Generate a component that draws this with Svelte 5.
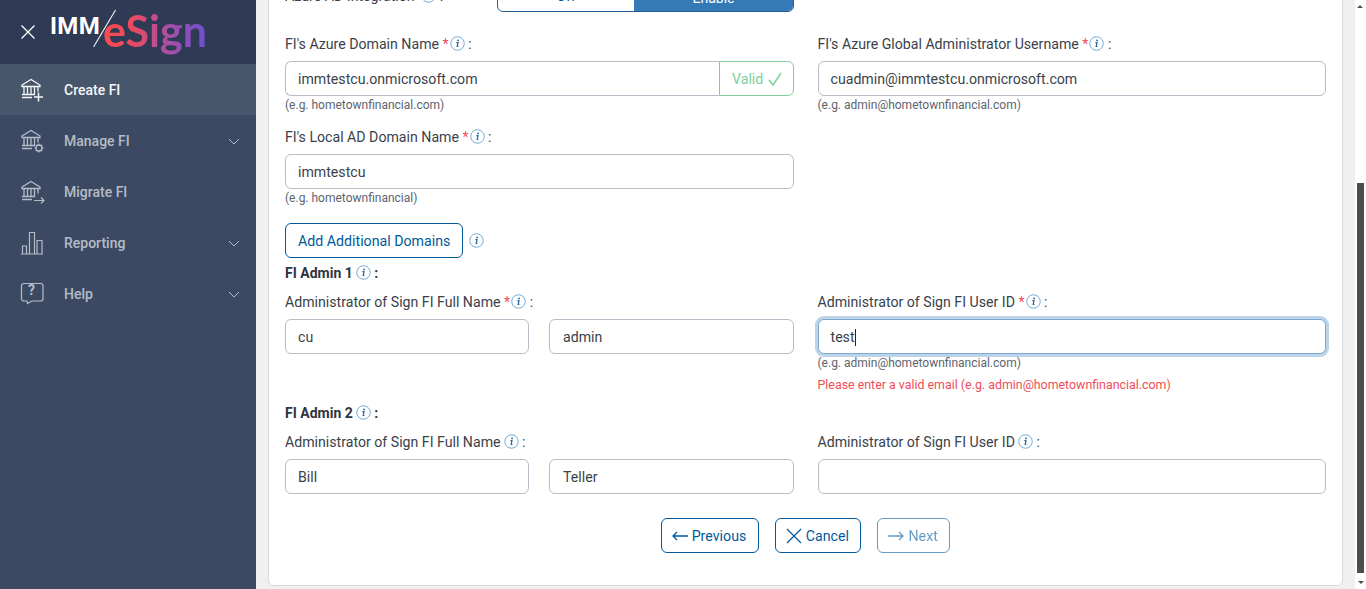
<script lang="ts">
	interface NavItem {
		label: string;
		icon: string;
		chevron: boolean;
		active?: boolean;
	}

	const navItems: NavItem[] = [
		{ label: 'Create FI', icon: 'plus', chevron: false, active: true },
		{ label: 'Manage FI', icon: 'gear', chevron: true },
		{ label: 'Migrate FI', icon: 'arrow', chevron: false },
		{ label: 'Reporting', icon: 'chart', chevron: true },
		{ label: 'Help', icon: 'help', chevron: true }
	];
</script>

{#snippet info()}
	<svg class="info" viewBox="0 0 16 16" width="15" height="15">
		<circle cx="8" cy="8" r="7.2" fill="none" stroke="#6ba6d4" stroke-width="1" />
		<path d="M6.8 7.1h1.7l-.8 4h1.200" fill="none" stroke="#24679f" stroke-width="1.300" />
		<circle cx="8.6" cy="4.700" r="1" fill="#24679f" />
	</svg>
{/snippet}

{#snippet bank()}
	<path d="M3 8 12 2.500 21 8v1.500H3zM5 9.500v8M8.500 9.500v8M12 9.500v8M15.500 9.500v8M19 9.500v5M3 17.500h13M3 20.500h10" fill="none" stroke="currentColor" stroke-width="1.300" />
{/snippet}

<div class="layout">
	<aside class="sidebar">
		<header class="brand">
			<svg class="close" viewBox="0 0 14 14" width="14" height="14">
				<path d="M.5.5l13 13M13.5.5l-13 13" stroke="#fff" stroke-width="1.300" fill="none" />
			</svg>
			<div class="logo">
				<span class="imm">IMM</span>
				<span class="slash"></span>
				<span class="esign">eSign</span>
			</div>
		</header>
		<nav>
			{#each navItems as item}
				<div class="nav-item" class:active={item.active}>
					<svg class="nav-icon" viewBox="0 0 26 26" width="26" height="26">
						{#if item.icon === 'plus'}
							{@render bank()}
							<path d="M19.500 15.500v9M15 20h9" stroke="currentColor" stroke-width="1.500" fill="none" />
						{:else if item.icon === 'gear'}
							{@render bank()}
							<circle cx="20" cy="20" r="3" fill="none" stroke="currentColor" stroke-width="1.300" />
							<path d="M20 15.500v1.700M20 22.800v1.700M15.500 20h1.700M22.800 20h1.700M16.800 16.800l1.200 1.200M22 22l1.200 1.200M23.200 16.800 22 18M18 22l-1.200 1.200" stroke="currentColor" stroke-width="1.200" fill="none" />
						{:else if item.icon === 'arrow'}
							{@render bank()}
							<path d="M15 21.500h10M22 18.500l3 3-3 3" stroke="currentColor" stroke-width="1.200" fill="none" />
						{:else if item.icon === 'chart'}
							<path d="M2 24h22M3.500 24v-8h4v8M10.500 24V2.500h5V24M18 24V10.500h5V24" fill="none" stroke="currentColor" stroke-width="1.200" />
						{:else}
							<path d="M5 2.500h16.500a2.500 2.500 0 0 1 2.500 2.500v12.500a2.500 2.500 0 0 1-2.500 2.500H13l-4.500 2.500-.5-2.500H5a2.500 2.500 0 0 1-2.500-2.500V5A2.500 2.500 0 0 1 5 2.500z" fill="none" stroke="currentColor" stroke-width="1.200" />
						{/if}
					</svg>
					{#if item.icon === 'help'}<span class="help-mark">?</span>{/if}
					<span class="nav-label">{item.label}</span>
					{#if item.chevron}
						<svg class="chevron" viewBox="0 0 12 7" width="12" height="7">
							<path d="M1 1l5 5 5-5" fill="none" stroke="currentColor" stroke-width="1" />
						</svg>
					{/if}
				</div>
			{/each}
		</nav>
	</aside>

	<main class="main">
		<section class="card">
			<div class="toggle-row">
				<span class="label">Azure AD Integration {@render info()} :</span>
				<div class="toggle">
					<span class="toggle-off">Off</span>
					<span class="toggle-on">Enable</span>
				</div>
			</div>

			<div class="grid domain-grid">
				<div class="field">
					<span class="label">FI's Azure Domain Name <b class="req">*</b>{@render info()} :</span>
					<div class="input-group">
						<div class="input grouped">immtestcu.onmicrosoft.com</div>
						<div class="valid">
							Valid
							<svg viewBox="0 0 14 14" width="14" height="14">
								<path d="M1 8l4 5L13 1" fill="none" stroke="#7dd09a" stroke-width="1.500" />
							</svg>
						</div>
					</div>
					<small>(e.g. hometownfinancial.com)</small>
				</div>
				<div class="field">
					<span class="label">FI's Azure Global Administrator Username <b class="req">*</b>{@render info()} :</span>
					<div class="input">cuadmin@immtestcu.onmicrosoft.com</div>
					<small>(e.g. admin@hometownfinancial.com)</small>
				</div>
				<div class="field">
					<span class="label">FI's Local AD Domain Name <b class="req">*</b>{@render info()} :</span>
					<div class="input">immtestcu</div>
					<small>(e.g. hometownfinancial)</small>
				</div>
			</div>

			<div class="add-row">
				<button class="btn add">Add Additional Domains</button>
				{@render info()}
			</div>

			<h4>FI Admin 1{@render info()} :</h4>
			<div class="grid admin-grid">
				<div class="field">
					<span class="label">Administrator of Sign FI Full Name <b class="req">*</b>{@render info()} :</span>
					<div class="name-pair">
						<div class="input">cu</div>
						<div class="input">admin</div>
					</div>
				</div>
				<div class="field">
					<span class="label">Administrator of Sign FI User ID <b class="req">*</b>{@render info()} :</span>
					<div class="input focused">test<i class="caret"></i></div>
					<small>(e.g. admin@hometownfinancial.com)</small>
					<small class="error">Please enter a valid email (e.g. admin@hometownfinancial.com)</small>
				</div>
			</div>

			<h4 class="second">FI Admin 2{@render info()} :</h4>
			<div class="grid admin-grid">
				<div class="field">
					<span class="label">Administrator of Sign FI Full Name{@render info()} :</span>
					<div class="name-pair">
						<div class="input">Bill</div>
						<div class="input">Teller</div>
					</div>
				</div>
				<div class="field">
					<span class="label">Administrator of Sign FI User ID{@render info()} :</span>
					<div class="input"></div>
				</div>
			</div>

			<div class="actions">
				<button class="btn">
					<svg viewBox="0 0 16 10" width="16" height="10"><path d="M16 5H1M5 1 1 5l4 4" fill="none" stroke="currentColor" stroke-width="1.300" /></svg>
					Previous
				</button>
				<button class="btn">
					<svg viewBox="0 0 16 16" width="16" height="16"><path d="M1 1l14 14M15 1 1 15" fill="none" stroke="currentColor" stroke-width="1.200" /></svg>
					Cancel
				</button>
				<button class="btn disabled">
					<svg viewBox="0 0 16 10" width="16" height="10"><path d="M0 5h15M11 1l4 4-4 4" fill="none" stroke="currentColor" stroke-width="1.300" /></svg>
					Next
				</button>
			</div>
		</section>
	</main>

	<div class="scrollbar">
		<span class="scroll-up"></span>
		<span class="scroll-thumb"></span>
		<span class="scroll-down"></span>
	</div>
</div>

<style>
	:global(body) {
		margin: 0;
		font-family: Roboto, "Liberation Sans", sans-serif;
		overflow: hidden;
	}

	.layout {
		display: flex;
		height: 589px;
		overflow: hidden;
		background: #f0f0f0;
	}

	/* Sidebar */
	.sidebar {
		flex: 0 0 256px;
		background: #3b4a62;
		color: #b5bcc8;
	}

	.brand {
		display: flex;
		align-items: center;
		gap: 16px;
		height: 64px;
		padding-left: 21px;
		box-sizing: border-box;
		background: #2f3b54;
	}

	.logo {
		position: relative;
		height: 64px;
		width: 170px;
	}

	.imm {
		position: absolute;
		left: -1px;
		top: 12px;
		font-size: 24px;
		line-height: 28px;
		font-weight: 700;
		letter-spacing: 0.3px;
		color: #fff;
	}

	.slash {
		position: absolute;
		left: 53px;
		top: 7px;
		width: 1.300px;
		height: 43px;
		background: #fff;
		transform: rotate(30.7deg);
	}

	.esign {
		position: absolute;
		left: 52px;
		top: 6px;
		font-family: Lato, sans-serif;
		font-size: 43px;
		line-height: 50px;
		font-weight: 700;
		background: linear-gradient(90deg, #ff4a4f 0%, #e84a62 30%, #a64faa 65%, #6c4fd0 100%);
		-webkit-background-clip: text;
		background-clip: text;
		color: transparent;
	}

	.nav-item {
		position: relative;
		display: flex;
		align-items: center;
		height: 51px;
		padding-left: 19px;
		font-size: 14px;
		font-weight: 500;
	}

	.nav-item.active {
		background: #47566b;
		color: #f4f6f8;
	}

	.nav-icon {
		flex: none;
	}

	.help-mark {
		position: absolute;
		left: 28px;
		top: 14px;
		font-size: 14px;
		font-weight: 700;
	}

	.nav-label {
		margin-left: 19px;
	}

	.chevron {
		position: absolute;
		right: 16px;
		top: 23px;
	}

	/* Main card */
	.main {
		flex: 1;
		min-width: 0;
		padding: 0 12px;
		overflow: hidden;
	}

	.card {
		margin-top: -14px;
		height: 600px;
		box-sizing: border-box;
		padding: 0 16px;
		background: #fff;
		border: 1px solid #d9d9d9;
		border-radius: 6px;
		color: #3a3f4a;
	}

	.toggle-row {
		display: flex;
		align-items: flex-end;
		height: 25px;
	}

	.toggle-row .label {
		flex: 0 0 212px;
		margin-bottom: 6px;
	}

	.toggle {
		display: flex;
		width: 297px;
		height: 25px;
		overflow: hidden;
		align-items: flex-end;
		box-sizing: border-box;
		border: 1px solid #1f6098;
		border-radius: 0 0 6px 6px;
		font-size: 14px;
		line-height: 20px;
	}

	.toggle-off {
		flex: 0 0 136px;
		text-align: center;
		color: #005a9c;
		padding-bottom: 5px;
	}

	.toggle-on {
		flex: 1;
		text-align: center;
		color: #fff;
		background: #337ab7;
		align-self: stretch;
		line-height: 20px;
		height: 24px;
	}

	.label {
		display: block;
		font-size: 14.150px;
		line-height: 20px;
		color: #3a3f4a;
	}

	.req {
		margin-right: -2px;
		color: #ef4d5a;
		font-weight: 400;
	}

	.info {
		vertical-align: -2px;
		margin-left: 3px;
	}

	.grid {
		display: grid;
		grid-template-columns: 509px 508.500px;
		column-gap: 23.500px;
	}

	.domain-grid {
		margin-top: 22px;
		row-gap: 13px;
	}

	.field {
		display: flex;
		flex-direction: column;
		min-width: 0;
	}

	.field .label {
		margin-bottom: 7px;
	}

	.input {
		box-sizing: border-box;
		height: 35px;
		padding: 0 12px;
		border: 1px solid #b8bcc6;
		border-radius: 6px;
		background: #fff;
		font-size: 14.150px;
		line-height: 34px;
		color: #3a3f4a;
		flex: 1;
	}

	.field > .input {
		flex: none;
	}

	.name-pair .input:last-child {
		padding-left: 13px;
	}

	.input-group {
		display: flex;
	}

	.input.grouped {
		border-radius: 6px 0 0 6px;
		border-right: none;
	}

	.valid {
		display: flex;
		align-items: center;
		gap: 5px;
		width: 75px;
		box-sizing: border-box;
		padding-left: 12px;
		border: 1px solid #7dd09a;
		border-radius: 0 6px 6px 0;
		font-size: 14.150px;
		color: #7dd09a;
	}

	small {
		font-size: 12px;
		line-height: 18px;
		color: #5c6470;
	}

	small.error {
		margin-top: 4px;
		font-size: 12.400px;
		color: #ef4d5a;
	}

	.add-row {
		display: flex;
		align-items: center;
		gap: 3px;
		margin-top: 16px;
	}

	.btn {
		display: inline-flex;
		align-items: center;
		gap: 4px;
		box-sizing: border-box;
		height: 35px;
		padding: 0 11.500px 0 10px;
		background: #fff;
		border: 1px solid #005a9c;
		border-radius: 6px;
		font: inherit;
		font-size: 14.200px;
		color: #005a9c;
	}

	.btn.add {
		padding: 0 12px;
	}

	.btn.disabled {
		opacity: 0.6;
	}

	h4 {
		margin: 6px 0 0;
		font-size: 14px;
		line-height: 18px;
		font-weight: 700;
		color: #2f3440;
	}

	h4.second {
		margin-top: 10px;
	}

	.admin-grid {
		margin-top: 10px;
	}

	.name-pair {
		display: grid;
		grid-template-columns: 244px 245px;
		column-gap: 20px;
	}

	.input.focused {
		border-color: #7fa8cf;
		box-shadow: 0 0 0 3px #bcd4e8;
	}

	.caret {
		display: inline-block;
		width: 1px;
		height: 17px;
		background: #222;
		vertical-align: -4px;
	}

	.actions {
		display: flex;
		justify-content: center;
		gap: 16px;
		margin-top: 24px;
	}

	/* Scrollbar */
	.scrollbar {
		position: relative;
		flex: 0 0 11px;
		background: #fff;
	}

	.scroll-up,
	.scroll-down {
		position: absolute;
		left: 2px;
		border-left: 3px solid transparent;
		border-right: 3px solid transparent;
	}

	.scroll-up {
		top: 5px;
		border-bottom: 3px solid #505050;
	}

	.scroll-down {
		top: 581px;
		left: 3px;
		border-top: 3px solid #505050;
	}

	.scroll-thumb {
		position: absolute;
		left: 2px;
		top: 183px;
		width: 7px;
		height: 390px;
		background: #4d4d4d;
	}
</style>
